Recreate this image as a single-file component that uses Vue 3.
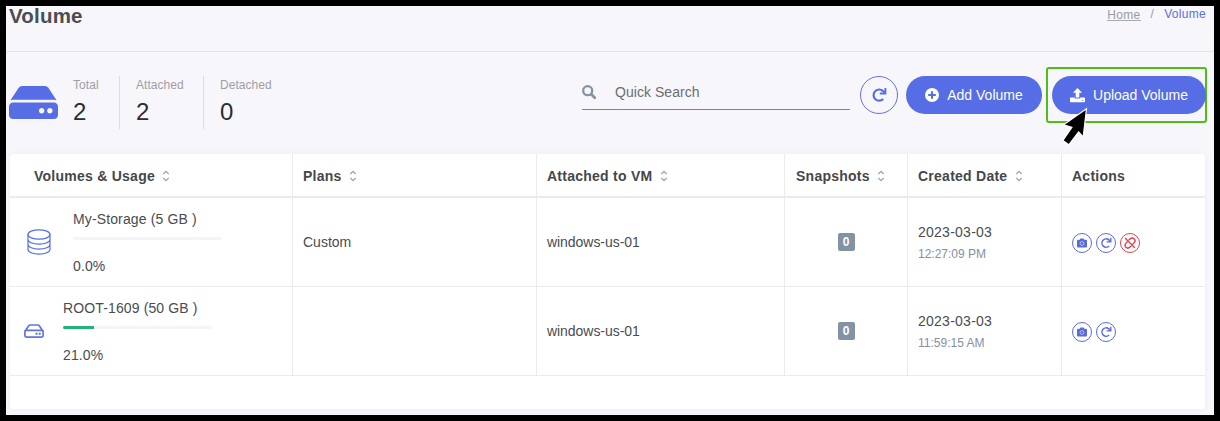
<script setup>
const stats = [
  { label: 'Total', value: 2 },
  { label: 'Attached', value: 2 },
  { label: 'Detached', value: 0 },
]
const columns = [
  { label: 'Volumes & Usage', sortable: true },
  { label: 'Plans', sortable: true },
  { label: 'Attached to VM', sortable: true },
  { label: 'Snapshots', sortable: true },
  { label: 'Created Date', sortable: true },
  { label: 'Actions', sortable: false },
]
const volumes = [
  { name: 'My-Storage (5 GB )', kind: 'data', usage: 0, plan: 'Custom', vm: 'windows-us-01', snapshots: 0, date: '2023-03-03', time: '12:27:09 PM' },
  { name: 'ROOT-1609 (50 GB )', kind: 'root', usage: 21, plan: '', vm: 'windows-us-01', snapshots: 0, date: '2023-03-03', time: '11:59:15 AM' },
]
</script>

<template>
  <div class="frame">
    <header class="top">
      <h1>Volume</h1>
      <nav class="crumbs">
        <a class="home">Home</a><span class="slash">/</span><span class="current">Volume</span>
      </nav>
    </header>

    <section class="toolbar">
      <svg class="drive" viewBox="0 64 576 384" preserveAspectRatio="none">
        <path fill="currentColor" d="M576 304v96c0 26.510-21.490 48-48 48H48c-26.510 0-48-21.490-48-48v-96c0-26.510 21.490-48 48-48h480c26.510 0 48 21.490 48 48zm-48-80a79.557 79.557 0 0 1 30.777 6.165L462.250 85.374A48.003 48.003 0 0 0 422.311 64H153.689a48 48 0 0 0-39.938 21.374L17.223 230.165A79.557 79.557 0 0 1 48 224h480zm-48 96c-17.673 0-32 14.327-32 32s14.327 32 32 32 32-14.327 32-32-14.327-32-32-32zm-96 0c-17.673 0-32 14.327-32 32s14.327 32 32 32 32-14.327 32-32-14.327-32-32-32z" />
      </svg>
      <dl class="stats">
        <div v-for="s in stats" :key="s.label" class="stat">
          <dt>{{ s.label }}</dt>
          <dd>{{ s.value }}</dd>
        </div>
      </dl>
      <div class="search">
        <svg width="14" height="14" viewBox="0 0 14 14" fill="none" stroke="#8392a5">
          <circle cx="5.700" cy="5.700" r="4.500" stroke-width="2.300" />
          <path d="M9.200 9.200 12.800 12.800" stroke-width="2.700" stroke-linecap="round" />
        </svg>
        <span>Quick Search</span>
      </div>
      <button class="round">
        <svg width="16" height="16" viewBox="0 0 16 16" fill="none" stroke="currentColor">
          <path d="M12.200 12A5.600 5.600 0 1 1 11.800 3.800L13.600 5.500" stroke-width="2.200" />
          <path d="M14.400 1V6.500H8.800" stroke-width="1.900" />
        </svg>
      </button>
      <button class="pill add">
        <svg width="14" height="14" viewBox="0 0 14 14">
          <circle cx="7" cy="7" r="7" fill="#fff" />
          <path d="M7 3.200v7.600M3.200 7h7.600" stroke="#566de5" stroke-width="2.100" />
        </svg>
        Add Volume
      </button>
      <div class="spotlight">
        <button class="pill upload">
          <svg width="15" height="15" viewBox="0 0 15 15" fill="#fff">
            <path d="M7.500 0 12 4.800H9.300V9.400H5.700V4.800H3z" />
            <path d="M.7 9.600H4.700V10.400H10.300V9.600H14.300Q15 9.600 15 10.300V13.600Q15 14.300 14.300 14.300H.7Q0 14.300 0 13.600V10.300Q0 9.600 .7 9.600ZM12.200 12v.9h.9v-.9Z" fill-rule="evenodd" />
          </svg>
          Upload Volume
        </button>
        <svg class="pointer" width="28" height="40" viewBox="0 0 28 40">
          <path d="M25.500 1.800 22.200 30 17.600 25 7.800 37.800 1.900 33.400 10.900 20.300 2.600 17.700z" fill="#000" stroke="#fff" stroke-width="1.200" />
        </svg>
      </div>
    </section>

    <section class="card">
      <table>
        <colgroup>
          <col class="c1" /><col class="c2" /><col class="c3" /><col class="c4" /><col class="c5" /><col />
        </colgroup>
        <thead>
          <tr>
            <th v-for="c in columns" :key="c.label">
              {{ c.label }}
              <svg v-if="c.sortable" class="sort" width="8" height="12" viewBox="0 0 8 12" fill="none" stroke="#a3a3a5" stroke-width="1.300">
                <path d="M1.300 4 4 1.300 6.700 4M1.300 8 4 10.700 6.700 8" />
              </svg>
            </th>
          </tr>
        </thead>
        <tbody>
          <tr v-for="v in volumes" :key="v.name">
            <td>
              <div class="volume" :class="v.kind">
                <svg v-if="v.kind === 'data'" width="24" height="26" viewBox="0 0 24 26" fill="none" stroke="#566de5" stroke-width="1.200">
                  <ellipse cx="12" cy="5.500" rx="11" ry="4.700" />
                  <path d="M1 5.500V20.500C1 23 5.800 25.200 12 25.200S23 23 23 20.500V5.500M1 10.500C1 13 5.800 15.200 12 15.200S23 13 23 10.500M1 15.500C1 18 5.800 20.200 12 20.200S23 18 23 15.500" />
                </svg>
                <svg v-else width="20" height="14" viewBox="0 0 20 14" fill="none" stroke="#6374df" stroke-width="1.700">
                  <rect x=".9" y="6.300" width="18.200" height="6.800" rx="1.300" />
                  <path d="M1.200 7 4.700 1.800Q5.200 1 6.200 1H13.800Q14.800 1 15.300 1.800L18.800 7" />
                  <path d="M11.500 9.700h2M14.700 9.700h2" stroke-width="2" />
                </svg>
                <div class="usage">
                  <div>{{ v.name }}</div>
                  <div class="bar"><i :style="{ width: v.usage + '%' }"></i></div>
                  <div>{{ v.usage.toFixed(1) }}%</div>
                </div>
              </div>
            </td>
            <td>{{ v.plan }}</td>
            <td class="vm">{{ v.vm }}</td>
            <td class="center"><span class="badge">{{ v.snapshots }}</span></td>
            <td>
              <div class="date">{{ v.date }}</div>
              <div class="time">{{ v.time }}</div>
            </td>
            <td>
              <div class="actions">
                <span class="act">
                  <svg width="10" height="10" viewBox="0 0 10 10">
                    <path d="M1 1.800H2.800L3.400.6H6.600L7.200 1.800H9Q10 1.800 10 2.800V8.400Q10 9.400 9 9.400H1Q0 9.400 0 8.400V2.800Q0 1.800 1 1.800Z" fill="currentColor" />
                    <circle cx="5" cy="5.500" r="1.900" fill="none" stroke="#c9d0f8" stroke-width=".8" />
                  </svg>
                </span>
                <span class="act">
                  <svg width="12" height="12" viewBox="0 0 16 16" fill="none" stroke="currentColor">
                    <path d="M12.200 12A5.600 5.600 0 1 1 11.800 3.800L13.600 5.500" stroke-width="2" />
                    <path d="M14.400 1V6.500H8.800" stroke-width="1.800" />
                  </svg>
                </span>
                <span v-if="v.kind === 'data'" class="act danger">
                  <svg width="12" height="12" viewBox="0 0 12 12" fill="none" stroke="currentColor" stroke-width="1.400" stroke-linecap="round">
                    <path d="M1.500 1.500 10.500 10.500M5 2.800 6.200 1.900A2.500 2.500 0 0 1 10.200 5.600L9 7M7 9.200 5.800 10.100A2.500 2.500 0 0 1 1.800 6.400L3 5" />
                  </svg>
                </span>
              </div>
            </td>
          </tr>
        </tbody>
      </table>
    </section>
  </div>
</template>

<style>
body { background: #000; }
</style>

<style scoped>
.frame {
  box-sizing: border-box;
  width: 1220px;
  height: 421px;
  border: 6px solid #000;
  background: #f6f6fb;
  font-family: "Liberation Sans", Arial, sans-serif;
  font-size: 14px;
  color: #4a4c50;
  overflow: hidden;
}
.top {
  box-sizing: border-box;
  height: 46px;
  padding: 0 8px 0 3px;
  border-bottom: 1px solid #e3e3e8;
  display: flex;
  justify-content: space-between;
}
h1 { margin: -2px 0 0; font-size: 20.5px; line-height: 24px; letter-spacing: .2px; color: #4a4d52; }
.crumbs { display: flex; font-size: 12px; line-height: 16px; letter-spacing: .3px; color: #9b9ca1; }
.home { height: 14px; line-height: 18px; border-bottom: 1px solid #a9aaae; }
.slash { margin: 0 10px; }
.current { color: #5c6fdb; }
.toolbar { display: flex; height: 102px; padding-left: 3px; box-sizing: border-box; }
.drive { width: 49px; height: 33px; margin-top: 34px; color: #566de5; flex: none; }
.stats { display: flex; margin: 24px 0 0 15px; height: 53px; }
.stat { box-sizing: border-box; padding-right: 20px; margin-right: 16px; border-right: 1px solid #dcdce2; }
.stat:first-child { width: 47px; }
.stat:nth-child(2) { width: 68px; }
.stat:last-child { border: 0; margin: 0; padding: 0; }
dt { font-size: 12px; line-height: 18px; letter-spacing: .05px; color: #9fa0a4; }
dd { margin: 3px 0 0; font-size: 24px; line-height: 30px; color: #2c2d31; }
.search {
  margin-left: auto;
  margin-top: 22px;
  box-sizing: border-box;
  width: 268px;
  height: 36px;
  border-bottom: 1px solid #7a879f;
  display: flex;
  align-items: center;
  gap: 19px;
  color: #6d6e72;
  letter-spacing: .05px;
}
button { font: inherit; padding: 0; cursor: pointer; }
.round {
  box-sizing: border-box;
  width: 38px;
  height: 38px;
  margin: 24px 8px 0 10px;
  border: 1px solid #6474da;
  border-radius: 50%;
  background: transparent;
  color: #566de5;
  display: flex;
  align-items: center;
  justify-content: center;
}
.pill {
  height: 38px;
  border: 0;
  border-radius: 19px;
  background: #566de5;
  color: #fff;
  display: flex;
  align-items: center;
  justify-content: center;
  gap: 8px;
}
.add { width: 136px; margin-top: 24px; }
.spotlight {
  position: relative;
  box-sizing: border-box;
  width: 161px;
  height: 56px;
  margin: 15px 7px 0 4px;
  padding: 7px 0 0 4px;
  border: 2px solid #4fbf16;
  border-radius: 3px;
}
.upload { width: 154px; }
.pointer { position: absolute; left: 13px; top: 38px; }
.card { margin-left: 4px; width: 1195px; height: 255px; background: #fff; border-radius: 3px; box-shadow: 0 0 6px rgba(80, 80, 120, .05); }
table { width: 100%; border-collapse: separate; border-spacing: 0; table-layout: fixed; }
.c1 { width: 283px; }
.c2 { width: 244px; }
.c3 { width: 248px; }
.c4 { width: 123px; }
.c5 { width: 154px; }
th, td { box-sizing: border-box; padding: 0 10px; border-right: 1px solid #ebebed; text-align: left; }
th:last-child, td:last-child { border-right: 0; }
th { height: 44px; padding-top: 2px; border-bottom: 2px solid #ebebed; letter-spacing: .25px; white-space: nowrap; color: #45474b; }
th:first-child { padding-left: 24px; }
th:nth-child(4) { padding-left: 11px; }
td { height: 89px; border-bottom: 1px solid #ebebed; line-height: 20px; }
td:first-child { padding: 0 0 0 14px; }
.vm { letter-spacing: -.05px; }
.sort { margin-left: 3px; vertical-align: -1px; }
.volume { display: flex; align-items: center; }
.volume.data { padding-left: 3px; }
.data .usage { margin-left: 22px; }
.root .usage { margin-left: 19px; }
.usage { width: 149px; line-height: 20px; letter-spacing: .13px; }
.bar { height: 3px; margin: 8px 0 16px; background: #f5f5f7; border-radius: 2px; overflow: hidden; }
.bar i { display: block; height: 3px; background: #23b279; }
.center { text-align: center; }
.badge { display: inline-block; width: 17px; height: 18px; line-height: 18px; margin-top: -2px; border-radius: 2px; background: #8392a5; color: #fff; font-size: 12px; font-weight: bold; vertical-align: middle; }
.date { line-height: 20px; margin-top: 2px; letter-spacing: .25px; }
.time { font-size: 12px; line-height: 20px; margin-top: 2px; color: #8290a5; }
.actions { display: flex; gap: 4px; padding-top: 2px; }
.act { box-sizing: border-box; width: 20px; height: 20px; border: 1px solid currentColor; border-radius: 50%; color: #5a6bdb; display: flex; align-items: center; justify-content: center; }
.danger { color: #d9444f; }
</style>
